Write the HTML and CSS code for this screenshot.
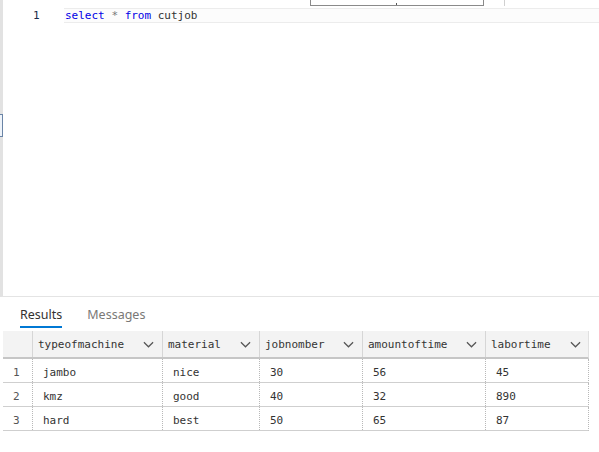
FILE: index.html
```html
<!DOCTYPE html>
<html>
<head>
<meta charset="utf-8">
<link rel="stylesheet" href="styles.css">
</head>
<body>
<div class="editor">
  <div class="dropdown"><span class="tick"></span></div>
  <div class="vline"></div>
  <div class="marker"></div>
  <div class="line">
    <span class="ln">1</span>
    <span class="code"><span class="kw">select</span> <span class="op">*</span> <span class="kw">from</span> cutjob</span>
  </div>
</div>
<div class="results">
  <div class="tabs">
    <span class="tab active">Results</span>
    <span class="tab">Messages</span>
  </div>
  <div class="grid">
    <div class="hrow">
      <div class="hcell num"></div>
      <div class="hcell"><span>typeofmachine</span><svg class="chev" viewBox="0 0 12 7"><path d="M1 1l5 5 5-5"/></svg></div>
      <div class="hcell"><span>material</span><svg class="chev" viewBox="0 0 12 7"><path d="M1 1l5 5 5-5"/></svg></div>
      <div class="hcell"><span>jobnomber</span><svg class="chev" viewBox="0 0 12 7"><path d="M1 1l5 5 5-5"/></svg></div>
      <div class="hcell"><span>amountoftime</span><svg class="chev" viewBox="0 0 12 7"><path d="M1 1l5 5 5-5"/></svg></div>
      <div class="hcell"><span>labortime</span><svg class="chev" viewBox="0 0 12 7"><path d="M1 1l5 5 5-5"/></svg></div>
    </div>
    <div class="row"><div class="cell num">1</div><div class="cell">jambo</div><div class="cell">nice</div><div class="cell">30</div><div class="cell">56</div><div class="cell">45</div></div>
    <div class="row"><div class="cell num">2</div><div class="cell">kmz</div><div class="cell">good</div><div class="cell">40</div><div class="cell">32</div><div class="cell">890</div></div>
    <div class="row"><div class="cell num">3</div><div class="cell">hard</div><div class="cell">best</div><div class="cell">50</div><div class="cell">65</div><div class="cell">87</div></div>
  </div>
</div>
</body>
</html>
```
FILE: styles.css
```css
html, body { margin: 0; padding: 0; background: #fff; }
body { width: 599px; height: 452px; overflow: hidden; font-family: "DejaVu Sans Mono", monospace; }

.editor {
  position: relative;
  height: 297px;
  border-left: 3px solid #e2e2e2;
  border-bottom: 1px solid #e4e4e4;
  box-sizing: border-box;
  padding-top: 8px;
}
.dropdown {
  position: absolute;
  left: 307px; top: -10px;
  width: 172px; height: 14px;
  border: 1px solid #8a8a8a;
  background: #fff;
}
.tick { position: absolute; left: 85px; bottom: 0; width: 1px; height: 2px; background: #555; }
.vline { position: absolute; left: 501px; top: 0; width: 1px; height: 6px; background: #d0d0d0; }
.marker {
  position: absolute; left: -3px; top: 114px;
  width: 2px; height: 21px;
  border: 1px solid #6a84a6; border-left: none;
  background: #eef3f9;
}
.line { display: flex; height: 15px; align-items: center; font-size: 11px; }
.ln { width: 61px; padding-left: 30px; box-sizing: border-box; color: #1b2a4a; }
.code {
  flex: 1; height: 15px; line-height: 14px;
  border-top: 1px solid #ececec; border-bottom: 1px solid #ececec;
  background: #fcfcfc; box-sizing: border-box;
  padding-left: 1px; color: #333;
}
.kw { color: #0000e6; }
.op { color: #777; }

.results { padding-left: 3px; }
.tabs { display: flex; gap: 25px; padding-left: 17px; height: 31px; margin-bottom: 3px; font-family: "Noto Sans", "Segoe UI", sans-serif; font-size: 12.5px; }
.tab { color: #7a7876; padding-top: 9px; box-sizing: border-box; height: 31px; }
.tab.active { color: #323130; border-bottom: 2px solid #0078d4; }

.grid { width: 586px; font-size: 11px; color: #333; }
.hrow, .row { display: grid; grid-template-columns: 29px 130px 97px 103px 123px 104px; }
.hrow { height: 28px; background: #f3f3f3; border-bottom: 2px solid #c6c6c6; box-sizing: border-box; border-right: 1px solid #e0e0e0; }
.hcell { display: flex; align-items: center; justify-content: space-between; padding: 1px 8px 0 5px; border-left: 1px solid #d6d6d6; color: #333; }
.hcell.num { border-left: none; }
.chev { width: 11px; height: 7px; fill: none; stroke: #555; stroke-width: 1.3; }
.row { height: 24px; border-bottom: 1px solid #cfcfcf; box-sizing: border-box; border-right: 1px dotted #b8b8b8; }
.cell { display: flex; align-items: center; padding: 4px 0 0 10px; border-left: 1px dotted #b8b8b8; }
.cell.num { border-left: none; color: #555; }
```
